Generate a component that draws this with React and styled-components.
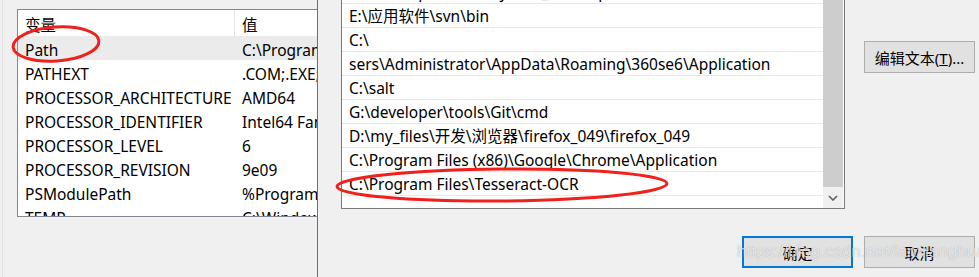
import React from "react"
import styled, { createGlobalStyle } from "styled-components"

const GlobalStyle = createGlobalStyle`
  html, body {
    margin: 0;
    padding: 0;
    background: #f0f0f0;
    overflow: hidden;
  }
  body {
    font-family: "Noto Sans", "Noto Sans CJK SC", sans-serif;
    font-size: 15.5px;
    color: #000;
  }
`

const Screen = styled.div`
  position: relative;
  display: flex;
  width: 979px;
  height: 277px;
  overflow: hidden;
  background: #f0f0f0;
`

// left (background) dialog: environment variables
const BackDialog = styled.div`
  width: 315px;
  flex-shrink: 0;
  overflow: hidden;
  padding: 9px 0 0 14px;
  box-sizing: border-box;
  border-left: 1px solid #e2e2e2;
  margin-left: 2px;
`

const VarList = styled.div`
  width: 340px;
  height: 208px;
  box-sizing: border-box;
  border: 1px solid #828790;
  background: #fff;
  overflow: hidden;
`

const VarRow = styled.div`
  display: grid;
  grid-template-columns: 217px 1fr;
  height: 24px;
  align-items: center;
  background: ${p => (p.$selected ? "#ebebeb" : "#fff")};
  white-space: nowrap;
`

const HeadRow = styled(VarRow)`
  height: 26px;
`

const Cell = styled.div`
  padding: 3px 0 0 7px;
  box-sizing: border-box;
  height: 100%;
  display: flex;
  align-items: center;
  overflow: hidden;
  border-right: ${p => (p.$divider ? "1px solid #e5e5e5" : "none")};
`

// right (front) dialog: edit path
const FrontDialog = styled.div`
  flex: 1;
  display: grid;
  grid-template-columns: 504px 111px;
  grid-template-rows: 209px auto;
  column-gap: 19px;
  padding-left: 23px;
  border-left: 1px solid #6e6e6e;
  background: #f0f0f0;
`

const PathList = styled.div`
  display: flex;
  height: 209px;
  box-sizing: border-box;
  border: 1px solid #7a7a7a;
  border-top: none;
  background: #fff;
  overflow: hidden;
`

const PathRows = styled.div`
  flex: 1;
  margin-top: -20px;
`

const PathRow = styled.div`
  height: 23px;
  line-height: 24px;
  padding-left: 7px;
  border-bottom: 1px solid #e8e8e8;
  white-space: nowrap;
  overflow: hidden;
`

const ScrollBar = styled.div`
  width: 20px;
  display: flex;
  flex-direction: column;
  margin-right: 1px;
  background: #f0f0f0;
`

const Thumb = styled.div`
  flex: 1;
  background: #cdcdcd;
`

const ArrowBox = styled.div`
  height: 21px;
  display: flex;
  align-items: center;
  justify-content: center;
`

const SideButtons = styled.div`
  padding-top: 41px;
`

const Button = styled.button`
  width: 111px;
  height: 32px;
  box-sizing: border-box;
  font-family: "Noto Sans", "Noto Sans CJK SC", sans-serif;
  font-size: 15px;
  color: #000;
  background: #e1e1e1;
  border: ${p => (p.$primary ? "2px solid #0078d7" : "1px solid #adadad")};
  padding: 0;
  cursor: default;
`

const Footer = styled.div`
  grid-column: 1 / 3;
  display: flex;
  justify-content: flex-end;
  gap: 11px;
  padding-top: 27px;
`

const Underline = styled.span`
  text-decoration: underline;
`

const Annotations = styled.svg`
  position: absolute;
  left: 0;
  top: 0;
  pointer-events: none;
`

const Watermark = styled.div`
  position: absolute;
  left: 737px;
  top: 242px;
  font-family: "Liberation Sans", Arial, sans-serif;
  font-size: 17px;
  color: rgba(255, 255, 255, 0.7);
  text-shadow: 0 0 1px rgba(0, 0, 0, 0.3);
  pointer-events: none;
`

const vars = [
  ["Path", "C:\\Program Files\\"],
  ["PATHEXT", ".COM;.EXE;.BAT"],
  ["PROCESSOR_ARCHITECTURE", "AMD64"],
  ["PROCESSOR_IDENTIFIER", "Intel64 Family"],
  ["PROCESSOR_LEVEL", "6"],
  ["PROCESSOR_REVISION", "9e09"],
  ["PSModulePath", "%ProgramFiles%"],
  ["TEMP", "C:\\Windows\\Temp"],
]

const paths = [
  "D:\\developer\\tools\\Python_37\\Scripts",
  "E:\\应用软件\\svn\\bin",
  "C:\\",
  "sers\\Administrator\\AppData\\Roaming\\360se6\\Application",
  "C:\\salt",
  "G:\\developer\\tools\\Git\\cmd",
  "D:\\my_files\\开发\\浏览器\\firefox_049\\firefox_049",
  "C:\\Program Files (x86)\\Google\\Chrome\\Application",
  "C:\\Program Files\\Tesseract-OCR",
  "",
]

export default function App() {
  return (
    <Screen>
      <GlobalStyle />
      <BackDialog>
        <VarList>
          <HeadRow>
            <Cell $divider>变量</Cell>
            <Cell>值</Cell>
          </HeadRow>
          {vars.map(([name, value], i) => (
            <VarRow key={name} $selected={i === 0}>
              <Cell>{name}</Cell>
              <Cell>{value}</Cell>
            </VarRow>
          ))}
        </VarList>
      </BackDialog>

      <FrontDialog>
        <PathList>
          <PathRows>
            {paths.map((p, i) => (
              <PathRow key={i}>{p}</PathRow>
            ))}
          </PathRows>
          <ScrollBar>
            <Thumb />
            <ArrowBox>
              <svg width="10" height="6" viewBox="0 0 10 6">
                <path d="M1 1l4 4 4-4" fill="none" stroke="#606060" strokeWidth="1.6" />
              </svg>
            </ArrowBox>
          </ScrollBar>
        </PathList>
        <SideButtons>
          <Button>
            编辑文本(<Underline>T</Underline>)...
          </Button>
        </SideButtons>
        <Footer>
          <Button $primary>确定</Button>
          <Button>取消</Button>
        </Footer>
      </FrontDialog>

      <Annotations width="979" height="277">
        <ellipse cx="56" cy="44" rx="43" ry="17" fill="none" stroke="#f0201c" strokeWidth="3" transform="rotate(-4 56 44)" />
        <ellipse cx="502" cy="185" rx="165" ry="16" fill="none" stroke="#f0201c" strokeWidth="3" transform="rotate(-0.5 502 185)" />
      </Annotations>
      <Watermark>https://blog.csdn.net/lanxianghua</Watermark>
    </Screen>
  )
}
